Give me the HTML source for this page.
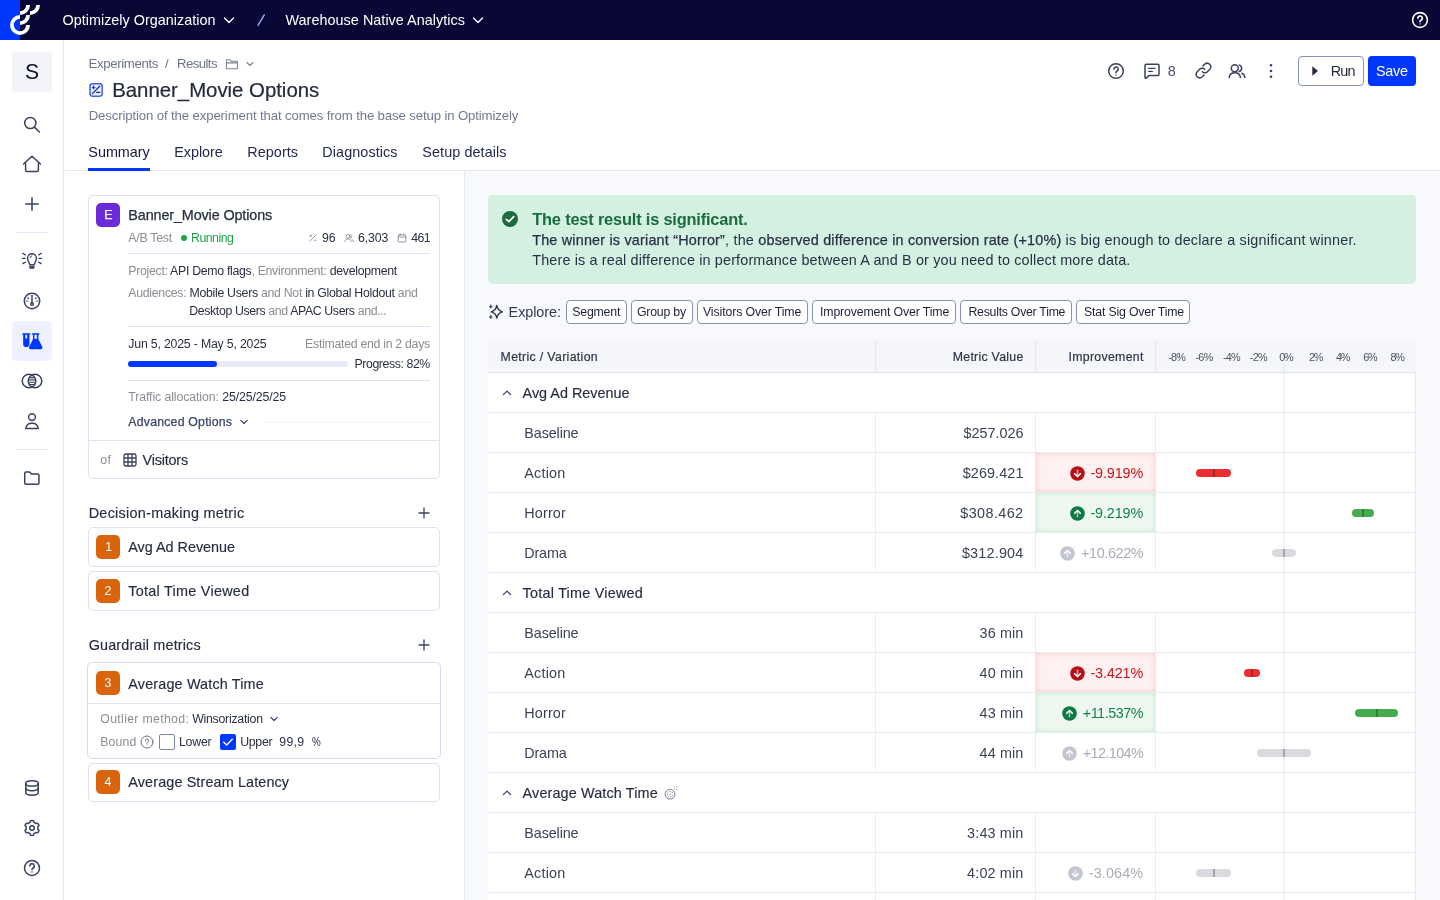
<!DOCTYPE html>
<html lang="en"><head>
<meta charset="utf-8">
<title>Banner_Movie Options</title>
<style>
*{box-sizing:border-box;margin:0;padding:0}
html,body{width:1440px;height:900px;overflow:hidden;background:#fff}
body{font-family:"Liberation Sans",sans-serif;color:#232a3f;position:relative;filter:opacity(1)}
.abs{position:absolute}
.t{position:absolute;white-space:nowrap;line-height:1}
svg{position:absolute;overflow:visible}
.ico{fill:none;stroke:#3a4260;stroke-width:1.5;stroke-linecap:round;stroke-linejoin:round}

/* top bar */
#topbar{left:0;top:0;width:1440px;height:40px;background:#080736}
#topblue{left:0;top:0;width:20px;height:40px;background:#0037ff}
.tb{color:#fff;font-size:14.4px}

/* sidebar */
#side{left:0;top:40px;width:64px;height:860px;background:#fff;border-right:1px solid #e2e6f3}
.sdiv{left:16px;width:32px;height:1px;background:#e2e6f3}

/* page header */
#hdr{left:65px;top:40px;width:1375px;height:131px;background:#fff;border-bottom:1px solid #e4e7f2}
.bc{font-size:13.2px;color:#6c7389}
.tab{font-size:14.4px;color:#222850}


.card{position:absolute;border:1px solid #dde2f2;border-radius:5px;background:#fff}
.hl{position:absolute;height:1px;background:#dde2f2}
.g{color:#8c8d94}
.d{color:#2a3043}
.s12{font-size:12.300px}
.s14{font-size:14.400px;color:#262d42;-webkit-text-stroke:.15px currentColor}
.badge{position:absolute;width:24px;height:24px;border-radius:5px;background:#d9640c}
.bn{font-size:12.300px;color:#fff}
.med{-webkit-text-stroke:.25px currentColor}


.btn{position:absolute;top:300px;height:24px;border:1px solid #8790b5;border-radius:4px;background:#fff}
.bt{font-size:12.300px;color:#1d2338}
.th{font-size:12.300px;color:#2f3548;-webkit-text-stroke:.2px currentColor}
.ax{font-size:10.800px;color:#4d525f}
.rl{position:absolute;left:488px;width:928px;height:1px;background:#e8edf0}
.vl{position:absolute;width:1px;background:#e8edf0}
.v14{font-size:14.400px;color:#3a4256}
.red{color:#c4161c}.grn{color:#14834a}.gry{color:#a9adb9}
.cell{position:absolute;left:1036px;width:119px;height:39px}
.bar{position:absolute;height:8px;border-radius:4px;z-index:2}
.tick{position:absolute;width:2px;height:8px;z-index:3}

/* panels */
#left{left:65px;top:171px;width:400px;height:729px;background:#fff;border-right:1px solid #e2e6f3}
#right{left:465px;top:171px;width:975px;height:729px;background:#f8f9fc}
</style>
</head>
<body>

<!-- ======= TOP BAR ======= -->
<div id="topbar" class="abs"></div>
<div id="topblue" class="abs"></div>
<svg style="left:0;top:0" width="64" height="40" viewBox="0 0 64 40" fill="none" stroke="#fff" stroke-width="3.8">
  <path d="M20 16.9 A8.1 8.1 0 1 0 28.1 25"></path>
  <path d="M20 23.1 A8.1 8.1 0 0 0 28.1 15"></path>
  <path d="M20 13.1 A8.1 8.1 0 0 0 28.1 5"></path>
  <path d="M30 13.1 A8.1 8.1 0 0 0 38.1 5"></path>
</svg>
<div class="t tb" style="letter-spacing: 0.01px; top: 12.81px; left: 62.5px;">Optimizely Organization</div>
<svg style="left:222px;top:13px" width="14" height="14" viewBox="0 0 14 14" fill="none" stroke="#fff" stroke-width="1.4" stroke-linecap="round" stroke-linejoin="round"><path d="M2.5 5 L7 9.5 L11.5 5"></path></svg>
<svg style="left:255px;top:12px" width="12" height="16" viewBox="0 0 12 16" fill="none" stroke="#9fb0ff" stroke-width="1.3" stroke-linecap="round"><path d="M9.3 2.8 L3.0 13.4"></path></svg>
<div class="t tb" style="letter-spacing: 0.033px; top: 12.81px; left: 285.5px;">Warehouse Native Analytics</div>
<svg style="left:471px;top:13px" width="14" height="14" viewBox="0 0 14 14" fill="none" stroke="#fff" stroke-width="1.4" stroke-linecap="round" stroke-linejoin="round"><path d="M2.5 5 L7 9.5 L11.5 5"></path></svg>
<svg style="left:1411px;top:11px" width="18" height="18" viewBox="0 0 18 18" fill="none" stroke="#fff" stroke-width="1.6" stroke-linecap="round" stroke-linejoin="round"><circle cx="9" cy="9" r="7.4"></circle><path d="M6.9 7.2a2.2 2.2 0 1 1 2.9 2.1c-.5.2-.8.6-.8 1.1v.3"></path><circle cx="9" cy="12.9" r=".6" fill="#fff" stroke="none"></circle></svg>

<!-- ======= SIDEBAR ======= -->
<div id="side" class="abs"></div>
<div class="abs" style="left:12px;top:52px;width:40px;height:40px;border-radius:4px;background:#f3f4fa"></div>
<div class="t" style="font-size: 21.2px; color: rgb(17, 19, 46); letter-spacing: -0.341px; top: 61.35px; left: 25.1px;">S</div>
<!-- search -->
<svg class="ico" style="left:22px;top:114px" width="20" height="20" viewBox="0 0 20 20"><circle cx="8.3" cy="9" r="5.6"></circle><path d="M12.4 13.1 L17.4 18"></path></svg>
<!-- home -->
<svg class="ico" style="left:22px;top:154px" width="20" height="20" viewBox="0 0 20 20"><path d="M1.5 10 L10 2.2 L18.5 10 M3.6 8.3 V16.2 a1.2 1.2 0 0 0 1.2 1.2 H15.2 a1.2 1.2 0 0 0 1.2 -1.2 V8.3"></path></svg>
<!-- plus -->
<svg class="ico" style="left:22px;top:194px" width="20" height="20" viewBox="0 0 20 20"><path d="M3.700 10 H16.300 M10 3.700 V16.300"></path></svg>
<div class="abs sdiv" style="top:232px"></div>
<!-- lightbulb -->
<svg class="ico" style="left:20px;top:248px" width="24" height="24" viewBox="0 0 24 24"><path d="M9.700 16.700C9.700 14.700 7.600 13.500 7.600 10.200a4.400 4.400 0 0 1 8.800 0C16.400 13.500 14.300 14.700 14.300 16.700z" stroke-width="1.400"></path><path d="M9.500 18.300h5l-.9 2.100h-3.200z" fill="#3a4260" stroke-width=".8"></path><path d="M10.100 9.700a2.100 2.100 0 0 1 1.700-1.800" stroke-width="1"></path><path d="M2.700 5.300l2.500 1.600M2.400 10.300h2.700M2.900 15.600l2.400-1.500M21.300 5.300l-2.500 1.600M21.600 10.300h-2.700M21.100 15.600l-2.400-1.500" stroke-width="1.300"></path></svg>
<!-- gauge -->
<svg class="ico" style="left:20px;top:289px" width="24" height="24" viewBox="0 0 24 24"><circle cx="12" cy="12" r="7.700"></circle><path d="M12 6.400v7.400"></path><circle cx="12" cy="15" r="1.250"></circle><path d="M7.700 8.800l.8.700M16.300 8.800l-.8.700M6.600 12h1M17.400 12h-1" stroke-width="1.200"></path></svg>
<!-- flask active -->
<div class="abs" style="left:12px;top:321px;width:40px;height:40px;border-radius:5px;background:#eef1ff"></div>
<svg style="left:20.700px;top:329.800px" width="22.600" height="22.600" viewBox="0 0 24 24" fill="#0037ff" stroke="none"><path d="M1.500 3.500h8.300v1.600h-.8v9.700a3.350 3.350 0 0 1-6.700 0V5.100h-.8z"></path><rect x="4.700" y="5.100" width="1.800" height="3.900" fill="#eef1ff"></rect><path d="M11.800 3.500h7.600v1.600h-.9v4.600l4.100 8.100c.6 1.200-.2 2.600-1.600 2.600H10.300c-1.400 0-2.200-1.400-1.600-2.600l4.000-8.100V5.100h-.9z"></path><rect x="14.300" y="5.100" width="2.500" height="4.300" fill="#eef1ff"></rect></svg>
<!-- venn -->
<svg class="ico" style="left:19px;top:369px" width="26" height="24" viewBox="0 0 26 24"><circle cx="10" cy="12" r="6.800"></circle><circle cx="16" cy="12" r="6.800"></circle><path d="M11 8.600h4M10.200 10.900h5.600M10.200 13.200h5.600M11 15.500h4" stroke-width="1.100"></path></svg>
<!-- user -->
<svg class="ico" style="left:20px;top:409px" width="24" height="24" viewBox="0 0 24 24"><circle cx="12" cy="8.100" r="3.400"></circle><path d="M5.800 19.400c.5-3.300 3-5.100 6.200-5.100s5.700 1.800 6.200 5.100z"></path></svg>
<div class="abs sdiv" style="top:449px"></div>
<!-- folder -->
<svg class="ico" style="left:20px;top:466px" width="24" height="24" viewBox="0 0 24 24"><path d="M4.750 7.200a1.200 1.200 0 0 1 1.200-1.200h3.600l2.200 2.100h6a1.200 1.200 0 0 1 1.200 1.200v7.800a1.200 1.200 0 0 1-1.200 1.200H5.950a1.200 1.200 0 0 1-1.200-1.200z"></path></svg>
<!-- database -->
<svg class="ico" style="left:20px;top:776px" width="24" height="24" viewBox="0 0 24 24"><ellipse cx="12" cy="7.400" rx="6.200" ry="2.700"></ellipse><path d="M5.800 7.400v9.200c0 1.500 2.800 2.700 6.200 2.700s6.200-1.200 6.200-2.700V7.400"></path><path d="M5.800 12c0 1.500 2.800 2.700 6.200 2.700s6.200-1.200 6.200-2.700"></path></svg>
<!-- gear -->
<svg class="ico" style="left:20px;top:816px" width="24" height="24" viewBox="0 0 24 24"><circle cx="12" cy="12" r="2.300"></circle><path d="M10.18 6.39L10.59 4.74A7.4 7.4 0 0 1 13.41 4.74L13.82 6.39A5.9 5.9 0 0 1 15.95 7.62L17.58 7.15A7.4 7.4 0 0 1 19.00 9.59L17.77 10.77A5.9 5.9 0 0 1 17.77 13.23L19.00 14.41A7.4 7.4 0 0 1 17.58 16.85L15.95 16.38A5.9 5.9 0 0 1 13.82 17.61L13.41 19.26A7.4 7.4 0 0 1 10.59 19.26L10.18 17.61A5.9 5.9 0 0 1 8.05 16.38L6.42 16.85A7.4 7.4 0 0 1 5.00 14.41L6.23 13.23A5.9 5.9 0 0 1 6.23 10.77L5.00 9.59A7.4 7.4 0 0 1 6.42 7.15L8.05 7.62A5.9 5.9 0 0 1 10.18 6.39z"></path></svg>
<!-- help -->
<svg class="ico" style="left:20px;top:856px" width="24" height="24" viewBox="0 0 24 24"><circle cx="12" cy="12" r="7.500"></circle><path d="M9.800 10.100a2.250 2.250 0 1 1 3.050 2.100c-.55.250-.85.700-.85 1.250v.250"></path><circle cx="12" cy="16.100" r=".75" fill="#3a4260" stroke="none"></circle></svg>

<!-- ======= PAGE HEADER ======= -->

<div id="hdr" class="abs"></div>
<div class="t bc" style="letter-spacing: -0.345px; top: 56.83px; left: 88.5px;">Experiments</div>
<div class="t bc" style="top: 56.83px; left: 165px;">/</div>
<div class="t bc" style="letter-spacing: -0.569px; top: 56.83px; left: 177px;">Results</div>
<svg class="ico" style="left:225px;top:58px;stroke:#7a8096;stroke-width:1.1" width="14" height="12" viewBox="0 0 14 12"><path d="M1.4 2.6a.8.8 0 0 1 .8-.8h2.700l1.400 1.500h5.300a.8.8 0 0 1 .8.8v5.900a.8.8 0 0 1-.8.8H2.200a.8.8 0 0 1-.8-.8z M1.400 4.900h11"></path></svg>
<svg class="ico" style="left:245px;top:60px;stroke:#7a8096;stroke-width:1.1" width="10" height="8" viewBox="0 0 10 8"><path d="M2 2.500 L5 5.500 L8 2.500"></path></svg>
<!-- title icon -->
<svg style="left:88px;top:82px" width="16" height="16" viewBox="0 0 16 16" fill="none" stroke-linecap="round" stroke-linejoin="round"><rect x="2.050" y="1.850" width="12.100" height="12.300" rx="2.300" fill="#f1f4ff" stroke="#3f60e8" stroke-width="1.500"></rect><path d="M4.300 11.600 L11.700 4.300M8.600 10.300h3.200" stroke="#0a22d8" stroke-width="1.300"></path><path d="M5.600 3.600c.3 1.300.7 1.700 2 2-1.300.3-1.700.7-2 2-.3-1.300-.7-1.700-2-2 1.300-.3 1.700-.7 2-2z" fill="#0a22d8" stroke="#0a22d8" stroke-width=".3"></path></svg>
<div class="t" style="font-size: 20.4px; color: rgb(35, 42, 63); -webkit-text-stroke: 0.2px currentcolor; letter-spacing: -0.021px; top: 79.53px; left: 112.2px;">Banner_Movie Options</div>
<div class="t" style="font-size: 13.2px; color: rgb(115, 122, 142); letter-spacing: -0.129px; top: 108.83px; left: 88.7px;">Description of the experiment that comes from the base setup in Optimizely</div>
<div class="t tab" style="color: rgb(19, 23, 63); letter-spacing: -0.011px; top: 145.11px; left: 88.3px;">Summary</div>
<div class="abs" style="left:88px;top:168px;width:62px;height:3px;background:#0037ff"></div>
<div class="t tab" style="letter-spacing: -0.071px; top: 145.11px; left: 174.3px;">Explore</div>
<div class="t tab" style="letter-spacing: 0.044px; top: 145.11px; left: 247.3px;">Reports</div>
<div class="t tab" style="letter-spacing: 0.083px; top: 145.11px; left: 322.3px;">Diagnostics</div>
<div class="t tab" style="letter-spacing: 0.084px; top: 145.11px; left: 422.3px;">Setup details</div>

<!-- header actions -->
<svg class="ico" style="left:1106px;top:61px" width="20" height="20" viewBox="0 0 20 20"><circle cx="10" cy="10" r="7.300"></circle><path d="M7.900 8.200a2.150 2.150 0 1 1 2.900 2c-.5.250-.8.650-.8 1.150v.350"></path><circle cx="10" cy="13.900" r=".7" fill="#3a4260" stroke="none"></circle></svg>
<svg class="ico" style="left:1142px;top:61px" width="20" height="20" viewBox="0 0 20 20"><path d="M3 4.400a1.200 1.200 0 0 1 1.200-1.200h11.600a1.200 1.200 0 0 1 1.200 1.200v8.800a1.200 1.200 0 0 1-1.200 1.200H7.200l-3.100 2.700a.65.650 0 0 1-1.100-.5z"></path><path d="M6.600 7.400h6.300M6.600 10.300h3.800" stroke-width="1.300"></path></svg>
<div class="t" style="font-size: 14.4px; color: rgb(74, 82, 112); letter-spacing: -0.816px; top: 63.61px; left: 1167.8px;">8</div>
<svg class="ico" style="left:1192.500px;top:60.400px;stroke-width:18" width="21" height="21" viewBox="0 0 256 256"><path d="M122.300 71.400l19.800-19.800a44.100 44.100 0 0 1 62.300 62.300l-28.300 28.200a43.900 43.900 0 0 1-62.200 0"></path><path d="M133.700 184.600l-19.800 19.800a44.100 44.100 0 0 1-62.300-62.300l28.300-28.200a43.900 43.900 0 0 1 62.200 0"></path></svg>
<svg class="ico" style="left:1227px;top:61px" width="20" height="20" viewBox="0 0 20 20"><circle cx="7.800" cy="7.200" r="3.500"></circle><path d="M2.200 16.500c.4-3 2.700-4.700 5.600-4.700s5.200 1.700 5.600 4.700"></path><path d="M12.300 3.900a3.500 3.500 0 0 1 0 6.600M14.900 12.200c1.700.6 2.700 2.100 3 4.300"></path></svg>
<svg style="left:1261px;top:61px" width="20" height="20" viewBox="0 0 20 20" fill="#3a4260"><circle cx="10" cy="4.300" r="1.300"></circle><circle cx="10" cy="10" r="1.300"></circle><circle cx="10" cy="15.700" r="1.300"></circle></svg>
<div class="abs" style="left:1298px;top:56px;width:66px;height:30px;border:1px solid #8790b5;border-radius:4px;background:#fff"></div>
<svg style="left:1311px;top:65px" width="8" height="12" viewBox="0 0 8 12" fill="#232a3f"><path d="M1.300 1.200 L7 6 L1.300 10.800z"></path></svg>
<div class="t" style="font-size: 14.4px; color: rgb(35, 42, 63); letter-spacing: -0.902px; top: 63.61px; left: 1330.8px;">Run</div>
<div class="abs" style="left:1368px;top:56px;width:48px;height:30px;border-radius:4px;background:#0037ff"></div>
<div class="t" style="font-size: 14.4px; color: rgb(255, 255, 255); letter-spacing: -0.278px; top: 63.61px; left: 1376px;">Save</div>


<div id="left" class="abs"></div>
<!-- experiment card -->
<div class="card" style="left:88px;top:195px;width:352px;height:284px"></div>
<div class="badge" style="left:96px;top:203px;background:#6b2bd6"></div>
<div class="t bn med" style="letter-spacing: -0.403px; top: 208.99px; left: 104.3px;">E</div>
<div class="t s14 med" style="letter-spacing: -0.13px; top: 208.01px; left: 128.3px;">Banner_Movie Options</div>
<div class="t s12 g" style="letter-spacing: -0.26px; top: 231.89px; left: 128.3px;">A/B Test</div>
<div class="abs" style="left:181px;top:235px;width:6px;height:6px;border-radius:3px;background:#1ea446"></div>
<div class="t s12" style="color: rgb(30, 164, 70); letter-spacing: -0.516px; top: 231.89px; left: 191.1px;">Running</div>
<svg style="left:309px;top:234px" width="8" height="8" viewBox="0 0 8 8" fill="none" stroke="#8b8f9b" stroke-width=".9" stroke-linecap="round"><path d="M7 1 L1 7"></path><path d="M1 1.800h1.600M1.800 1v1.600M5.400 6.200h1.600"></path></svg>
<div class="t s12 d" style="letter-spacing: 0.006px; top: 231.89px; left: 322px;">96</div>
<svg style="left:343.500px;top:233px" width="10" height="10" viewBox="0 0 10 10" fill="none" stroke="#8b8f9b" stroke-width=".9" stroke-linecap="round"><circle cx="4" cy="3.400" r="1.900"></circle><path d="M.8 8.600c.3-1.800 1.600-2.700 3.200-2.700s2.900.9 3.200 2.700M6.300 1.600a1.900 1.900 0 0 1 0 3.600M8 6.400c.8.400 1.300 1.100 1.500 2.200"></path></svg>
<div class="t s12 d" style="letter-spacing: -0.096px; top: 231.89px; left: 357.9px;">6,303</div>
<svg style="left:397px;top:233px" width="10" height="10" viewBox="0 0 10 10" fill="none" stroke="#8b8f9b" stroke-width=".9" stroke-linecap="round"><rect x="1.200" y="1.800" width="7.600" height="7.200" rx="1"></rect><path d="M1.200 4.100h7.600M3.200 .8v1.800M6.800 .8v1.800"></path></svg>
<div class="t s12 d" style="letter-spacing: -0.61px; top: 231.89px; left: 411.2px;">461</div>
<div class="hl" style="left:128px;top:253px;width:302px"></div>
<div class="t s12 g" style="letter-spacing: -0.294px; top: 264.59px; left: 128.3px;">Project: <span class="d">API Demo flags</span>, Environment: <span class="d">development</span></div>
<div class="t s12 g" style="letter-spacing: -0.283px; top: 286.79px; left: 128.3px;">Audiences: <span class="d">Mobile Users</span> and Not <span class="d">in Global Holdout</span> and</div>
<div class="t s12 g" style="letter-spacing: -0.36px; top: 304.69px; left: 189.3px;"><span class="d">Desktop Users</span> and <span class="d">APAC Users</span> and...</div>
<div class="hl" style="left:128px;top:325.500px;width:302px"></div>
<div class="t s12 d" style="letter-spacing: -0.187px; top: 337.79px; left: 128.3px;">Jun 5, 2025 - May 5, 2025</div>
<div class="t s12 g" style="letter-spacing: -0.28px; top: 337.79px; left: 305.1px;">Estimated end in 2 days</div>
<div class="abs" style="left:128px;top:361px;width:220px;height:6px;border-radius:3px;background:#e8ecf8"></div>
<div class="abs" style="left:128px;top:361px;width:89px;height:6px;border-radius:3px;background:#0037ff"></div>
<div class="t s12 d" style="letter-spacing: -0.404px; top: 357.89px; left: 354.5px;">Progress: 82%</div>
<div class="hl" style="left:128px;top:379.500px;width:302px"></div>
<div class="t s12 g" style="letter-spacing: -0.092px; top: 390.89px; left: 128.3px;">Traffic allocation: <span class="d">25/25/25/25</span></div>
<div class="t med" style="font-size: 12.3px; color: rgb(59, 69, 104); letter-spacing: 0.213px; top: 415.79px; left: 128.3px;">Advanced Options</div>
<svg class="ico" style="left:239px;top:418px;stroke-width:1.200" width="10" height="8" viewBox="0 0 10 8"><path d="M1.800 2.300 L5 5.500 L8.200 2.300"></path></svg>
<div class="abs" style="left:265px;top:421.500px;width:165px;height:0;border-top:1px dotted #e3e7f3"></div>
<div class="hl" style="left:89px;top:440px;width:350px"></div>
<div class="t s12 g" style="letter-spacing: 0.267px; top: 454.19px; left: 100.3px;">of</div>
<svg style="left:123px;top:453px" width="14" height="14" viewBox="0 0 14 14" fill="none" stroke="#3a4260" stroke-width="1.300" stroke-linejoin="round"><rect x="1" y="1" width="12" height="12" rx="1.800"></rect><path d="M1 5h12M1 9h12M5 1v12M9 1v12"></path></svg>
<div class="t s14" style="letter-spacing: -0.19px; top: 453.11px; left: 142.5px;">Visitors</div>

<!-- decision metrics -->
<div class="t s14" style="letter-spacing: 0.28px; top: 506.01px; left: 88.7px;">Decision-making metric</div>
<svg class="ico" style="left:418px;top:507px;stroke-width:1.300" width="12" height="12" viewBox="0 0 12 12"><path d="M1 6h10M6 1v10"></path></svg>
<div class="card" style="left:88px;top:527px;width:352px;height:40px"></div>
<div class="badge" style="left:96px;top:535px"></div>
<div class="t bn" style="top: 540.89px; left: 105.3px;">1</div>
<div class="t s14" style="letter-spacing: -0.011px; top: 540.31px; left: 128.3px;">Avg Ad Revenue</div>
<div class="card" style="left:88px;top:571px;width:352px;height:40px"></div>
<div class="badge" style="left:96px;top:579px"></div>
<div class="t bn" style="top: 584.89px; left: 104.6px;">2</div>
<div class="t s14" style="letter-spacing: 0.27px; top: 584.01px; left: 128.3px;">Total Time Viewed</div>

<!-- guardrail metrics -->
<div class="t s14" style="letter-spacing: 0.149px; top: 638.01px; left: 88.7px;">Guardrail metrics</div>
<svg class="ico" style="left:418px;top:639px;stroke-width:1.300" width="12" height="12" viewBox="0 0 12 12"><path d="M1 6h10M6 1v10"></path></svg>
<div class="card" style="left:87px;top:662px;width:354px;height:96.500px;border-color:#d5dbf0"></div>
<div class="hl" style="left:88px;top:703px;width:352px"></div>
<div class="badge" style="left:96px;top:671px"></div>
<div class="t bn" style="top: 676.89px; left: 104.6px;">3</div>
<div class="t s14" style="letter-spacing: 0.157px; top: 676.61px; left: 128.3px;">Average Watch Time</div>
<div class="t s12 g" style="letter-spacing: 0.321px; top: 712.99px; left: 100.3px;">Outlier method:</div>
<div class="t s12 d" style="letter-spacing: -0.247px; top: 712.99px; left: 192.2px;">Winsorization</div>
<svg class="ico" style="left:269px;top:715px;stroke-width:1.200" width="10" height="8" viewBox="0 0 10 8"><path d="M1.800 2.300 L5 5.500 L8.200 2.300"></path></svg>
<div class="t s12 g" style="letter-spacing: 0.108px; top: 735.89px; left: 100.3px;">Bound</div>
<svg style="left:140px;top:735px" width="14" height="14" viewBox="0 0 14 14" fill="none" stroke="#6c7389" stroke-width="1" stroke-linecap="round"><circle cx="7" cy="7" r="6"></circle><path d="M5.400 5.700a1.650 1.650 0 1 1 2.300 1.500c-.45.200-.7.500-.7 1v.2"></path><circle cx="7" cy="10" r=".6" fill="#6c7389" stroke="none"></circle></svg>
<div class="abs" style="left:159px;top:734px;width:16px;height:16px;border:1px solid #7d86ab;border-radius:2px;background:#fff"></div>
<div class="t s12 d" style="letter-spacing: -0.22px; top: 735.89px; left: 179px;">Lower</div>
<div class="abs" style="left:220px;top:734px;width:16px;height:16px;border-radius:2px;background:#0037ff"></div>
<svg style="left:220px;top:734px" width="16" height="16" viewBox="0 0 16 16" fill="none" stroke="#fff" stroke-width="1.500" stroke-linecap="round" stroke-linejoin="round"><path d="M3.800 8.300 L6.700 11 L12.200 5.200"></path></svg>
<div class="t s12 d" style="letter-spacing: -0.28px; top: 735.89px; left: 240.2px;">Upper</div>
<div class="t s12 d" style="letter-spacing: 0.316px; top: 735.89px; left: 279.3px;">99,9</div>
<div class="t s12 d" style="transform: scaleX(0.8); transform-origin: 0px 0px; top: 735.89px; left: 311.7px;">%</div>
<div class="card" style="left:88px;top:763px;width:352px;height:38.500px"></div>
<div class="badge" style="left:96px;top:770px"></div>
<div class="t bn" style="top: 775.89px; left: 104.6px;">4</div>
<div class="t s14" style="letter-spacing: 0.126px; top: 775.01px; left: 128.3px;">Average Stream Latency</div>

<div id="right" class="abs"></div>
<div class="abs" style="left:488px;top:195px;width:928px;height:89px;border-radius:5px;background:#d3f0e1"></div>
<svg style="left:501px;top:210px" width="18" height="18" viewBox="0 0 18 18"><circle cx="9" cy="9" r="8" fill="#1c6b3f"></circle><path d="M5.300 9.300 L7.900 11.700 L12.700 6.600" fill="none" stroke="#fff" stroke-width="1.700" stroke-linecap="round" stroke-linejoin="round"></path></svg>
<div class="t" style="font-size: 16.4px; color: rgb(28, 107, 63); font-weight: bold; letter-spacing: -0.188px; top: 211.32px; left: 532.2px;">The test result is significant.</div>
<div class="t" style="font-size: 14.4px; color: rgb(40, 48, 70); letter-spacing: 0.192px; top: 232.81px; left: 532.2px;"><span class="med">The winner is variant “Horror”</span>, the <span class="med">observed difference in conversion rate (+10%)</span> is big enough to declare a significant winner.</div>
<div class="t" style="font-size: 14.4px; color: rgb(40, 48, 70); letter-spacing: 0.152px; top: 252.81px; left: 532.2px;">There is a real difference in performance between A and B or you need to collect more data.</div>
<svg class="ico" style="left:488px;top:304px;stroke:#2a3146;stroke-width:1.300" width="16" height="16" viewBox="0 0 16 16"><path d="M8.800 1.400c.6 3.900 1.900 5.500 5.600 6.400-3.700.9-5 2.500-5.600 6.400-.6-3.900-1.900-5.500-5.600-6.400 3.700-.9 5-2.500 5.600-6.400z"></path><path d="M2.800 .9c.25 1.200.6 1.550 1.800 1.800-1.200.25-1.550.6-1.800 1.800-.25-1.200-.6-1.550-1.800-1.800 1.200-.25 1.550-.6 1.800-1.800zM2.800 11.200c.25 1.200.6 1.550 1.800 1.800-1.200.25-1.550.6-1.800 1.800-.25-1.200-.6-1.550-1.800-1.800 1.200-.25 1.550-.6 1.800-1.800z" fill="#2a3146" stroke-width=".5"></path></svg>
<div class="t" style="font-size: 14.4px; color: rgb(51, 58, 79); letter-spacing: -0.062px; top: 304.81px; left: 508.6px;">Explore:</div>
<div class="btn" style="left:566px;width:61px"></div>
<div class="t bt" style="letter-spacing: -0.174px; top: 306.09px; left: 572.2px;">Segment</div>
<div class="btn" style="left:631px;width:61.7px"></div>
<div class="t bt" style="letter-spacing: -0.212px; top: 306.09px; left: 637px;">Group by</div>
<div class="btn" style="left:697px;width:110.7px"></div>
<div class="t bt" style="letter-spacing: -0.112px; top: 306.09px; left: 703px;">Visitors Over Time</div>
<div class="btn" style="left:812px;width:143.7px"></div>
<div class="t bt" style="letter-spacing: -0.133px; top: 306.09px; left: 820px;">Improvement Over Time</div>
<div class="btn" style="left:960px;width:111.7px"></div>
<div class="t bt" style="letter-spacing: -0.261px; top: 306.09px; left: 968.5px;">Results Over Time</div>
<div class="btn" style="left:1076px;width:113.7px"></div>
<div class="t bt" style="letter-spacing: -0.184px; top: 306.09px; left: 1084.1px;">Stat Sig Over Time</div>
<div class="abs" style="left:488px;top:340px;width:928px;height:560px;background:#fff;border-radius:5px 5px 0 0"></div>
<div class="abs" style="left:488px;top:340px;width:928px;height:32px;background:#f5f6fa;border-radius:5px 5px 0 0"></div>
<div class="rl" style="top:372px;background:#dfe3ee"></div>
<div class="t th" style="letter-spacing: 0.336px; top: 350.99px; left: 500.6px;">Metric / Variation</div>
<div class="t th" style="letter-spacing: 0.272px; top: 350.99px; left: 952.8px;">Metric Value</div>
<div class="t th" style="letter-spacing: 0.312px; top: 350.99px; left: 1068.5px;">Improvement</div>
<div class="t ax" style="letter-spacing: -0.734px; top: 351.86px; left: 1168.2px;">-8%</div>
<div class="t ax" style="letter-spacing: -0.734px; top: 351.86px; left: 1195.5px;">-6%</div>
<div class="t ax" style="letter-spacing: -0.734px; top: 351.86px; left: 1222.9px;">-4%</div>
<div class="t ax" style="letter-spacing: -0.734px; top: 351.86px; left: 1249.8px;">-2%</div>
<div class="t ax" style="letter-spacing: -1.255px; top: 351.86px; left: 1279.2px;">0%</div>
<div class="t ax" style="letter-spacing: -1.255px; top: 351.86px; left: 1309px;">2%</div>
<div class="t ax" style="letter-spacing: -1.255px; top: 351.86px; left: 1336.1px;">4%</div>
<div class="t ax" style="letter-spacing: -1.255px; top: 351.86px; left: 1363.2px;">6%</div>
<div class="t ax" style="letter-spacing: -1.255px; top: 351.86px; left: 1390.6px;">8%</div>
<div class="vl" style="left:875px;top:340px;height:32px;background:#e2e6f0"></div>
<div class="vl" style="left:1035px;top:340px;height:32px;background:#e2e6f0"></div>
<div class="vl" style="left:1155px;top:340px;height:32px;background:#e2e6f0"></div>
<svg class="ico" style="left:502px;top:389px;stroke-width:1.200" width="10" height="8" viewBox="0 0 10 8"><path d="M1.400 5.700 L5 2.100 L8.600 5.700"></path></svg>
<div class="t s14" style="letter-spacing: -0.004px; top: 386.11px; left: 522.6px;">Avg Ad Revenue</div>
<div class="rl" style="top:412px"></div>
<div class="t v14" style="letter-spacing: -0.125px; top: 426.01px; left: 524.3px;">Baseline</div>
<div class="t v14" style="letter-spacing: -0.004px; top: 426.01px; left: 963.5px;">$257.026</div>
<div class="vl" style="left:875px;top:413px;height:39px"></div>
<div class="vl" style="left:1035px;top:413px;height:39px"></div>
<div class="vl" style="left:1155px;top:413px;height:39px"></div>
<div class="rl" style="top:452px"></div>
<div class="t v14" style="letter-spacing: 0.2px; top: 466.01px; left: 524.3px;">Action</div>
<div class="t v14" style="letter-spacing: 0.096px; top: 466.01px; left: 962.7px;">$269.421</div>
<div class="cell" style="top:453px;background:#fff0f1;box-shadow:inset 0 0 4px 1px #fbd0d3"></div>
<svg style="left:1070.4px;top:466.0px" width="15" height="15" viewBox="0 0 15 15"><circle cx="7.5" cy="7.5" r="7.3" fill="#b3141a"></circle><path d="M7.5 4.2 V9.8" fill="none" stroke="#fff" stroke-opacity=".6" stroke-width="1.6" stroke-linecap="round"></path><path d="M4.7 7.7 L7.5 10.5 L10.3 7.7" fill="none" stroke="#fff" stroke-width="1.6" stroke-linecap="round" stroke-linejoin="round"></path></svg>
<div class="t red" style="font-size: 14.4px; letter-spacing: -0.116px; top: 466.01px; left: 1090.4px;">-9.919%</div>
<div class="bar" style="left:1196px;top:469px;width:35px;background:#ee2d31"></div>
<div class="tick" style="left:1213px;top:469px;background:#a5262a"></div>
<div class="vl" style="left:875px;top:453px;height:39px"></div>
<div class="vl" style="left:1035px;top:453px;height:39px"></div>
<div class="vl" style="left:1155px;top:453px;height:39px"></div>
<div class="rl" style="top:492px"></div>
<div class="t v14" style="letter-spacing: 0.136px; top: 506.01px; left: 524.3px;">Horror</div>
<div class="t v14" style="letter-spacing: 0.396px; top: 506.01px; left: 960.3px;">$308.462</div>
<div class="cell" style="top:493px;background:#eef8f0;box-shadow:inset 0 0 4px 1px #cfe9d4"></div>
<svg style="left:1070.4px;top:506.0px" width="15" height="15" viewBox="0 0 15 15"><circle cx="7.5" cy="7.5" r="7.3" fill="#0f7a43"></circle><path d="M7.5 5.2 V10.8" fill="none" stroke="#fff" stroke-opacity=".6" stroke-width="1.6" stroke-linecap="round"></path><path d="M4.7 7.3 L7.5 4.5 L10.3 7.3" fill="none" stroke="#fff" stroke-width="1.6" stroke-linecap="round" stroke-linejoin="round"></path></svg>
<div class="t grn" style="font-size: 14.4px; letter-spacing: -0.116px; top: 506.01px; left: 1090.4px;">-9.219%</div>
<div class="bar" style="left:1352px;top:509px;width:22px;background:#46ab4f"></div>
<div class="tick" style="left:1362px;top:509px;background:#2c7f37"></div>
<div class="vl" style="left:875px;top:493px;height:39px"></div>
<div class="vl" style="left:1035px;top:493px;height:39px"></div>
<div class="vl" style="left:1155px;top:493px;height:39px"></div>
<div class="rl" style="top:532px"></div>
<div class="t v14" style="letter-spacing: -0.197px; top: 546.01px; left: 524.3px;">Drama</div>
<div class="t v14" style="letter-spacing: 0.196px; top: 546.01px; left: 961.9px;">$312.904</div>
<svg style="left:1060.3px;top:546.0px" width="15" height="15" viewBox="0 0 15 15"><circle cx="7.5" cy="7.5" r="7.3" fill="#c3c6d0"></circle><path d="M7.5 5.2 V10.8" fill="none" stroke="#fff" stroke-opacity=".6" stroke-width="1.6" stroke-linecap="round"></path><path d="M4.7 7.3 L7.5 4.5 L10.3 7.3" fill="none" stroke="#fff" stroke-width="1.6" stroke-linecap="round" stroke-linejoin="round"></path></svg>
<div class="t gry" style="font-size: 14.4px; letter-spacing: -0.39px; top: 546.01px; left: 1081.1px;">+10.622%</div>
<div class="bar" style="left:1272px;top:549px;width:24px;background:#d9dadd"></div>
<div class="tick" style="left:1283px;top:549px;background:#a0a4b4"></div>
<div class="vl" style="left:875px;top:533px;height:39px"></div>
<div class="vl" style="left:1035px;top:533px;height:39px"></div>
<div class="vl" style="left:1155px;top:533px;height:39px"></div>
<div class="rl" style="top:572px"></div>
<svg class="ico" style="left:502px;top:589px;stroke-width:1.200" width="10" height="8" viewBox="0 0 10 8"><path d="M1.400 5.700 L5 2.100 L8.600 5.700"></path></svg>
<div class="t s14" style="letter-spacing: 0.234px; top: 586.11px; left: 522.6px;">Total Time Viewed</div>
<div class="rl" style="top:612px"></div>
<div class="t v14" style="letter-spacing: -0.125px; top: 626.01px; left: 524.3px;">Baseline</div>
<div class="t v14" style="letter-spacing: 0.116px; top: 626.01px; left: 979.6px;">36 min</div>
<div class="vl" style="left:875px;top:613px;height:39px"></div>
<div class="vl" style="left:1035px;top:613px;height:39px"></div>
<div class="vl" style="left:1155px;top:613px;height:39px"></div>
<div class="rl" style="top:652px"></div>
<div class="t v14" style="letter-spacing: 0.2px; top: 666.01px; left: 524.3px;">Action</div>
<div class="t v14" style="letter-spacing: 0.116px; top: 666.01px; left: 979.6px;">40 min</div>
<div class="cell" style="top:653px;background:#fff0f1;box-shadow:inset 0 0 4px 1px #fbd0d3"></div>
<svg style="left:1069.5px;top:666.0px" width="15" height="15" viewBox="0 0 15 15"><circle cx="7.5" cy="7.5" r="7.3" fill="#b3141a"></circle><path d="M7.5 4.2 V9.8" fill="none" stroke="#fff" stroke-opacity=".6" stroke-width="1.6" stroke-linecap="round"></path><path d="M4.7 7.7 L7.5 10.5 L10.3 7.7" fill="none" stroke="#fff" stroke-width="1.6" stroke-linecap="round" stroke-linejoin="round"></path></svg>
<div class="t red" style="font-size: 14.4px; letter-spacing: -0.116px; top: 666.01px; left: 1090.4px;">-3.421%</div>
<div class="bar" style="left:1244px;top:669px;width:16px;background:#ee2d31"></div>
<div class="tick" style="left:1251px;top:669px;background:#a5262a"></div>
<div class="vl" style="left:875px;top:653px;height:39px"></div>
<div class="vl" style="left:1035px;top:653px;height:39px"></div>
<div class="vl" style="left:1155px;top:653px;height:39px"></div>
<div class="rl" style="top:692px"></div>
<div class="t v14" style="letter-spacing: 0.136px; top: 706.01px; left: 524.3px;">Horror</div>
<div class="t v14" style="letter-spacing: 0.116px; top: 706.01px; left: 979.6px;">43 min</div>
<div class="cell" style="top:693px;background:#eef8f0;box-shadow:inset 0 0 4px 1px #cfe9d4"></div>
<svg style="left:1061.5px;top:706.0px" width="15" height="15" viewBox="0 0 15 15"><circle cx="7.5" cy="7.5" r="7.3" fill="#0f7a43"></circle><path d="M7.5 5.2 V10.8" fill="none" stroke="#fff" stroke-opacity=".6" stroke-width="1.6" stroke-linecap="round"></path><path d="M4.7 7.3 L7.5 4.5 L10.3 7.3" fill="none" stroke="#fff" stroke-width="1.6" stroke-linecap="round" stroke-linejoin="round"></path></svg>
<div class="t grn" style="font-size: 14.4px; letter-spacing: -0.457px; top: 706.01px; left: 1082.7px;">+11.537%</div>
<div class="bar" style="left:1355px;top:709px;width:43px;background:#46ab4f"></div>
<div class="tick" style="left:1376px;top:709px;background:#2c7f37"></div>
<div class="vl" style="left:875px;top:693px;height:39px"></div>
<div class="vl" style="left:1035px;top:693px;height:39px"></div>
<div class="vl" style="left:1155px;top:693px;height:39px"></div>
<div class="rl" style="top:732px"></div>
<div class="t v14" style="letter-spacing: -0.197px; top: 746.01px; left: 524.3px;">Drama</div>
<div class="t v14" style="letter-spacing: 0.116px; top: 746.01px; left: 979.6px;">44 min</div>
<svg style="left:1062.3px;top:746.0px" width="15" height="15" viewBox="0 0 15 15"><circle cx="7.5" cy="7.5" r="7.3" fill="#c3c6d0"></circle><path d="M7.5 5.2 V10.8" fill="none" stroke="#fff" stroke-opacity=".6" stroke-width="1.6" stroke-linecap="round"></path><path d="M4.7 7.3 L7.5 4.5 L10.3 7.3" fill="none" stroke="#fff" stroke-width="1.6" stroke-linecap="round" stroke-linejoin="round"></path></svg>
<div class="t gry" style="font-size: 14.4px; letter-spacing: -0.59px; top: 746.01px; left: 1082.7px;">+12.104%</div>
<div class="bar" style="left:1257px;top:749px;width:54px;background:#d9dadd"></div>
<div class="tick" style="left:1283px;top:749px;background:#a0a4b4"></div>
<div class="vl" style="left:875px;top:733px;height:39px"></div>
<div class="vl" style="left:1035px;top:733px;height:39px"></div>
<div class="vl" style="left:1155px;top:733px;height:39px"></div>
<div class="rl" style="top:772px"></div>
<svg class="ico" style="left:502px;top:789px;stroke-width:1.200" width="10" height="8" viewBox="0 0 10 8"><path d="M1.400 5.700 L5 2.100 L8.600 5.700"></path></svg>
<div class="t s14" style="letter-spacing: 0.134px; top: 786.11px; left: 522.6px;">Average Watch Time</div>
<svg style="left:664px;top:784px" width="16" height="16" viewBox="0 0 16 16" fill="none" stroke="#6c7389" stroke-width=".9"><circle cx="6" cy="10.200" r="4.900"></circle><g fill="#6c7389" stroke="none"><circle cx="4" cy="8" r=".55"></circle><circle cx="6.200" cy="7.400" r=".55"></circle><circle cx="8.200" cy="8.600" r=".55"></circle><circle cx="3.400" cy="10.400" r=".55"></circle><circle cx="6" cy="10.200" r=".6"></circle><circle cx="8.600" cy="11.200" r=".55"></circle><circle cx="4.600" cy="12.600" r=".55"></circle><circle cx="7" cy="12.800" r=".55"></circle><circle cx="10.400" cy="4.800" r=".5"></circle><circle cx="10" cy="2.200" r=".45"></circle><circle cx="12.800" cy="2.400" r=".5"></circle><circle cx="12.800" cy="5.200" r=".5"></circle></g></svg>
<div class="rl" style="top:812px"></div>
<div class="t v14" style="letter-spacing: -0.125px; top: 826.01px; left: 524.3px;">Baseline</div>
<div class="t v14" style="letter-spacing: 0.15px; top: 826.01px; left: 967.1px;">3:43 min</div>
<div class="vl" style="left:875px;top:813px;height:39px"></div>
<div class="vl" style="left:1035px;top:813px;height:39px"></div>
<div class="vl" style="left:1155px;top:813px;height:39px"></div>
<div class="rl" style="top:852px"></div>
<div class="t v14" style="letter-spacing: 0.2px; top: 866.01px; left: 524.3px;">Action</div>
<div class="t v14" style="letter-spacing: 0.15px; top: 866.01px; left: 967.1px;">4:02 min</div>
<svg style="left:1068.4px;top:866.0px" width="15" height="15" viewBox="0 0 15 15"><circle cx="7.5" cy="7.5" r="7.3" fill="#c3c6d0"></circle><path d="M7.5 4.2 V9.8" fill="none" stroke="#fff" stroke-opacity=".6" stroke-width="1.6" stroke-linecap="round"></path><path d="M4.7 7.7 L7.5 10.5 L10.3 7.7" fill="none" stroke="#fff" stroke-width="1.6" stroke-linecap="round" stroke-linejoin="round"></path></svg>
<div class="t gry" style="font-size: 14.4px; letter-spacing: 0.113px; top: 866.01px; left: 1088.8px;">-3.064%</div>
<div class="bar" style="left:1196px;top:869px;width:35px;background:#d9dadd"></div>
<div class="tick" style="left:1213px;top:869px;background:#a0a4b4"></div>
<div class="vl" style="left:875px;top:853px;height:39px"></div>
<div class="vl" style="left:1035px;top:853px;height:39px"></div>
<div class="vl" style="left:1155px;top:853px;height:39px"></div>
<div class="rl" style="top:892px"></div>
<div class="t v14" style="letter-spacing: 0.136px; top: 906.01px; left: 524.3px;">Horror</div>
<div class="vl" style="left:875px;top:893px;height:7px"></div>
<div class="vl" style="left:1035px;top:893px;height:7px"></div>
<div class="vl" style="left:1155px;top:893px;height:7px"></div>
<div class="rl" style="top:932px"></div>
<div class="vl" style="left:1283px;top:365px;width:2px;height:535px;background:rgba(190,200,250,.21)"></div>
<div class="vl" style="left:1415px;top:372px;height:528px;background:#e6e9f0"></div>



</body></html>
